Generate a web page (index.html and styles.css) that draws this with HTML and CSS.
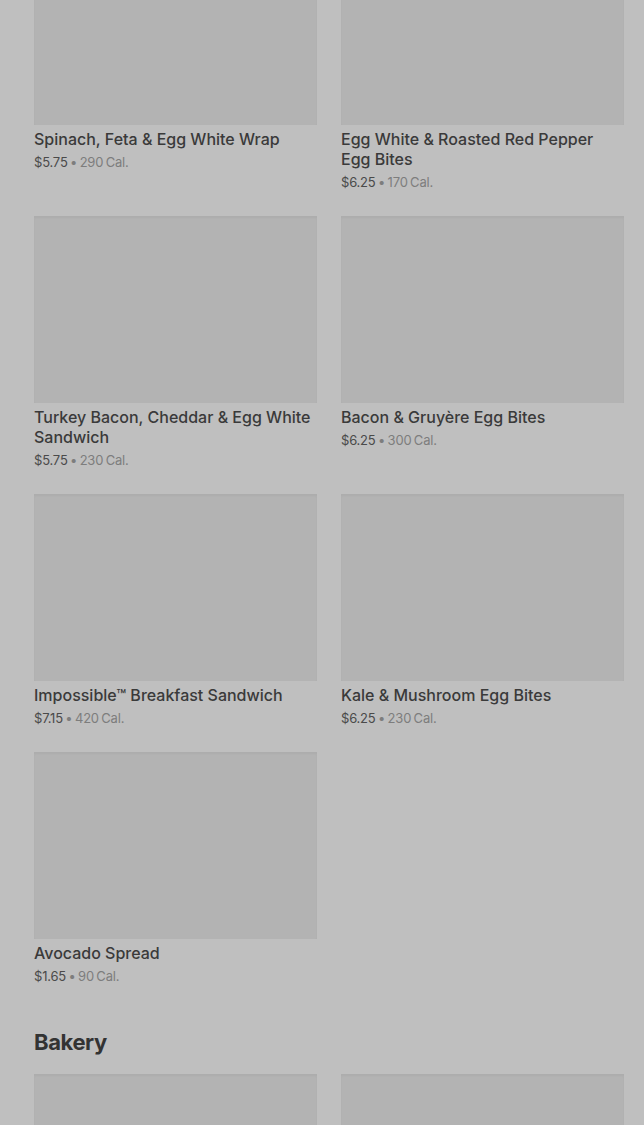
FILE: index.html
```html
<!DOCTYPE html>
<html lang="en">
<head>
<meta charset="utf-8">
<title>Menu</title>
<link rel="stylesheet" href="styles.css">
</head>
<body>
<main class="page">
  <section class="section first">
    <div class="grid">
      <article class="card"><div class="thumb"></div><h3 class="name">Spinach, Feta &amp; Egg White Wrap</h3><p class="meta"><span class="price">$5.75</span> <span class="cal">• 290 Cal.</span></p></article>
      <article class="card"><div class="thumb"></div><h3 class="name">Egg White &amp; Roasted Red Pepper Egg Bites</h3><p class="meta"><span class="price">$6.25</span> <span class="cal">• 170 Cal.</span></p></article>
      <article class="card"><div class="thumb"></div><h3 class="name">Turkey Bacon, Cheddar &amp; Egg White Sandwich</h3><p class="meta"><span class="price">$5.75</span> <span class="cal">• 230 Cal.</span></p></article>
      <article class="card"><div class="thumb"></div><h3 class="name">Bacon &amp; Gruyère Egg Bites</h3><p class="meta"><span class="price">$6.25</span> <span class="cal">• 300 Cal.</span></p></article>
      <article class="card"><div class="thumb"></div><h3 class="name">Impossible™ Breakfast Sandwich</h3><p class="meta"><span class="price">$7.15</span> <span class="cal">• 420 Cal.</span></p></article>
      <article class="card"><div class="thumb"></div><h3 class="name">Kale &amp; Mushroom Egg Bites</h3><p class="meta"><span class="price">$6.25</span> <span class="cal">• 230 Cal.</span></p></article>
      <article class="card"><div class="thumb"></div><h3 class="name">Avocado Spread</h3><p class="meta"><span class="price">$1.65</span> <span class="cal">• 90 Cal.</span></p></article>
    </div>
  </section>
  <section class="section">
    <h2 class="heading">Bakery</h2>
    <div class="grid">
      <article class="card"><div class="thumb"></div></article>
      <article class="card"><div class="thumb"></div></article>
    </div>
  </section>
</main>
</body>
</html>
```
FILE: styles.css
```css
html, body {
  margin: 0;
  padding: 0;
  background: #bfbfbf;
  overflow: hidden;
}
body {
  font-family: "Inter", "Roboto", sans-serif;
  color: #3b3b3b;
}
.page {
  padding: 0 20px 0 34px;
}
.section.first {
  margin-top: -62px;
}
.grid {
  display: grid;
  grid-template-columns: 283px 283px;
  column-gap: 24px;
  row-gap: 24px;
}
.card {
  display: flex;
  flex-direction: column;
}
.thumb {
  height: 187px;
  background: #b3b3b3;
  border-top: 1px solid #adadad;
  box-sizing: border-box;
  box-shadow: inset 0 1px 2px rgba(0,0,0,0.04);
}
.name {
  margin: 4px 0 0;
  font-size: 16px;
  line-height: 20px;
  font-weight: 500;
  color: #3a3a3a;
  letter-spacing: 0;
}
.meta {
  margin: 3px 0 0;
  font-size: 13px;
  line-height: 20px;
  letter-spacing: -0.2px;
  word-spacing: -1px;
}
.price {
  color: #4a4a4a;
}
.cal {
  color: #7d7d7d;
}
.heading {
  margin: 40px 0 16px;
  font-size: 22px;
  line-height: 32px;
  font-weight: 700;
  color: #333333;
  letter-spacing: -0.4px;
}
```
